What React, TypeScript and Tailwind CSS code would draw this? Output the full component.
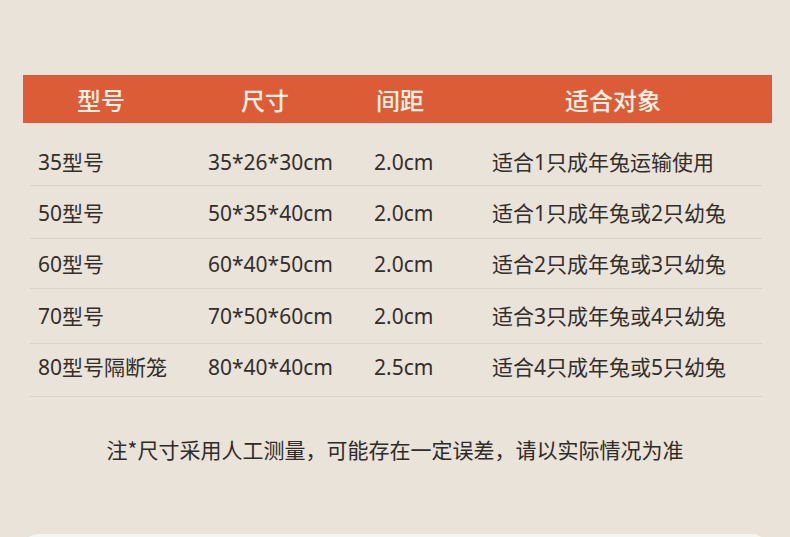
import React from "react";

const rows = [
  { m: "35型号", s: "35*26*30cm", g: "2.0cm", f: "适合1只成年兔运输使用", h: "h-[63px] pt-[17px]" },
  { m: "50型号", s: "50*35*40cm", g: "2.0cm", f: "适合1只成年兔或2只幼兔", h: "h-[53px] pt-[3px]" },
  { m: "60型号", s: "60*40*50cm", g: "2.0cm", f: "适合2只成年兔或3只幼兔", h: "h-[50px] pt-[2px]" },
  { m: "70型号", s: "70*50*60cm", g: "2.0cm", f: "适合3只成年兔或4只幼兔", h: "h-[55px] pt-[1px]" },
  { m: "80型号隔断笼", s: "80*40*40cm", g: "2.5cm", f: "适合4只成年兔或5只幼兔", h: "h-[53px] pb-[4px]" },
];

export default function App() {
  return (
    <div
      className="w-[790px] h-[537px] overflow-hidden bg-[#e9e3d9] pt-[75px] flex flex-col"
      style={{ fontFamily: '"Noto Sans", "Noto Sans CJK SC", sans-serif' }}
    >
      <div className="ml-[23px] mr-[18px]">
        <div className="h-[48px] pt-[3px] bg-[#dd5c38] grid grid-cols-[156px_172px_98px_1fr] items-center text-[24px] font-medium text-[#fbf1e6]">
          <div className="text-center">型号</div>
          <div className="text-center">尺寸</div>
          <div className="text-center">间距</div>
          <div className="text-center pl-[5px]">适合对象</div>
        </div>
        <div className="ml-[7px] mr-[10px]">
          {rows.map((r, i) => (
            <div
              key={i}
              className={`grid grid-cols-[170px_166px_118px_1fr] items-center pl-[8px] border-b border-[#dcd3c6] text-[21px] text-[#342e2b] ${r.h}`}
            >
              <div>{r.m}</div>
              <div>{r.s}</div>
              <div>{r.g}</div>
              <div>{r.f}</div>
            </div>
          ))}
        </div>
      </div>
      <div
        className="mt-[37px] text-center text-[21px] leading-[30px] text-[#2f2b28]"
        style={{ fontFamily: '"Noto Sans CJK SC", sans-serif' }}
      >
        注*尺寸采用人工测量，可能存在一定误差，请以实际情况为准
      </div>
      <div className="mt-[70px] mx-[22px] h-[60px] shrink-0 rounded-t-[16px] bg-[#f8f5f0]" />
    </div>
  );
}
